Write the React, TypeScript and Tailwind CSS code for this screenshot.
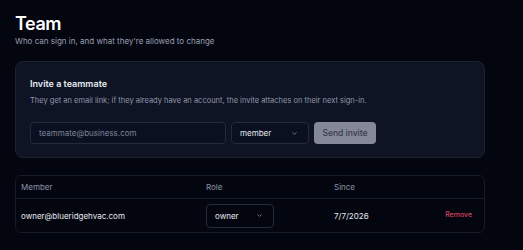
import { ChevronDown } from 'lucide-react';

const App = () => {
  return (
    <div
      className="min-h-[250px] w-full bg-[#03050f] px-[15px] pt-[13px] text-white"
      style={{ fontFamily: 'Inter, "Noto Sans", sans-serif' }}
    >
      <div className="w-[470px]">
        <div className="text-[18px] font-semibold leading-[22px] tracking-tight">Team</div>
        <p className="text-[8px] leading-[12px] text-[#9aa0b2]">
          Who can sign in, and what they're allowed to change
        </p>

        <div className="mt-[14px] rounded-[8px] border border-[#1c2233] bg-[#0f1424] px-[14px] pb-[13px] pt-[15px]">
          <div className="text-[9px] font-semibold leading-[14px] text-[#e8ebf3]">
            Invite a teammate
          </div>
          <p className="mt-[4px] text-[7.5px] leading-[12px] text-[#8f96aa]">
            They get an email link; if they already have an account, the invite attaches on their next sign-in.
          </p>
          <div className="mt-[15px] flex items-center gap-[5px]">
            <div className="flex h-[22px] w-[196px] items-center rounded-[4px] border border-[#242b3d] bg-[#0b1020] px-[8px] text-[8px] text-[#7d8498]">
              teammate@business.com
            </div>
            <div className="flex h-[22px] w-[78px] items-center justify-between rounded-[4px] border border-[#242b3d] bg-[#0b1020] pl-[8px] pr-[10px] text-[8px] text-[#e6e9f0]">
              <span>member</span>
              <ChevronDown className="h-[7px] w-[7px] text-[#8f96aa]" strokeWidth={2.5} />
            </div>
            <div className="flex h-[22px] w-[62px] items-center justify-center rounded-[4px] bg-[#858898] text-[8.5px] font-medium text-[#353a4a]">
              Send invite
            </div>
          </div>
        </div>

        <div className="mt-[17px] rounded-[6px] border border-[#161b29] bg-[#04060f]">
          <div className="grid h-[23px] grid-cols-[185px_128px_1fr_auto] items-center border-b border-[#161b29] px-[5px] text-[8px] text-[#8d93a6]">
            <span>Member</span>
            <span>Role</span>
            <span>Since</span>
            <span />
          </div>
          <div className="grid h-[33px] grid-cols-[185px_128px_1fr_auto] items-center pl-[5px] pr-[12px] text-[8px] text-[#e6e9f0]">
            <span>owner@blueridgehvac.com</span>
            <div>
              <div className="flex h-[24px] w-[68px] items-center justify-between rounded-[4px] border border-[#242b3d] bg-[#04060f] pl-[8px] pr-[10px]">
                <span>owner</span>
                <ChevronDown className="h-[7px] w-[7px] text-[#8f96aa]" strokeWidth={2.5} />
              </div>
            </div>
            <span>7/7/2026</span>
            <span className="text-[7px] font-medium text-[#d0445a]">Remove</span>
          </div>
        </div>
      </div>
    </div>
  );
};

export default App;
